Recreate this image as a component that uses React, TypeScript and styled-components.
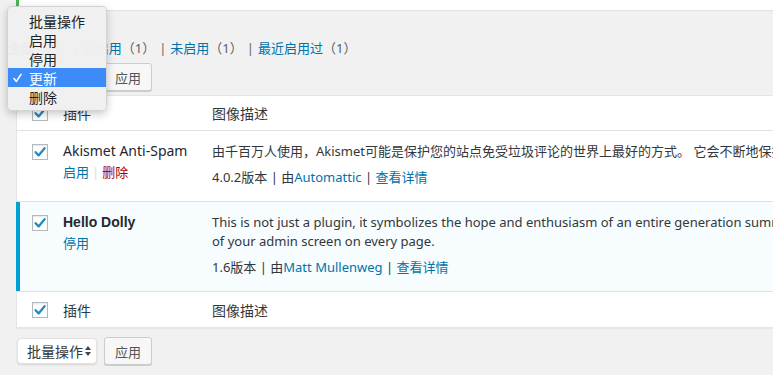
import React from "react";
import styled, { createGlobalStyle, css } from "styled-components";

const GlobalStyle = createGlobalStyle`
  html, body {
    margin: 0;
    padding: 0;
    overflow: hidden;
    background: #f1f1f1;
  }
  body {
    font-family: "Noto Sans", "Noto Sans CJK SC", sans-serif;
    font-size: 13px;
    color: #444;
  }
  * {
    box-sizing: border-box;
  }
`;

const Page = styled.div`
  position: relative;
  width: 1900px;
  height: 375px;
  padding-left: 16px;
`;

const Notice = styled.div`
  height: 10px;
  background: #fff;
  border-left: 3px solid #46b450;
  box-shadow: 0 1px 1px rgba(0, 0, 0, 0.06);
`;

const SubSubSub = styled.ul`
  display: flex;
  margin: 28px 0 0 -8px;
  padding: 0;
  list-style: none;
  line-height: 20px;
  color: #666;
`;

const FilterItem = styled.li`
  display: flex;
  white-space: nowrap;
`;

const Separator = styled.span`
  padding: 0 4px;
`;

const FilterLink = styled.a<{ $current?: boolean }>`
  color: ${(p) => (p.$current ? "#000" : "#0073aa")};
  font-weight: ${(p) => (p.$current ? 600 : 400)};
  text-decoration: none;
`;

const Count = styled.span`
  color: #555d66;
  font-weight: 400;
`;

const TableNav = styled.div<{ $bottom?: boolean }>`
  display: flex;
  align-items: center;
  gap: 7px;
  height: 28px;
  margin-top: ${(p) => (p.$bottom ? "9px" : "5px")};
`;

const Select = styled.div`
  display: flex;
  align-items: center;
  justify-content: space-between;
  width: 80px;
  height: 26px;
  margin-left: 1px;
  padding: 0 5px 0 9px;
  background: #fff;
  border: 1px solid #e2e2e2;
  border-radius: 4px;
  box-shadow: 0 1px 2px rgba(0, 0, 0, 0.12);
  font-size: 14px;
  color: #32373c;
`;

const Button = styled.div`
  display: flex;
  align-items: center;
  justify-content: center;
  width: 48px;
  height: 28px;
  background: #f7f7f7;
  border: 1px solid #ccc;
  border-radius: 3px;
  box-shadow: 0 1px 0 #ccc;
  font-size: 13px;
  color: #555;
`;

const Table = styled.div`
  margin-top: 4px;
  width: 1880px;
  background: #fff;
  border: 1px solid #e5e5e5;
  box-shadow: 0 1px 1px rgba(0, 0, 0, 0.04);
`;

const Row = styled.div<{ $head?: boolean; $active?: boolean }>`
  display: grid;
  grid-template-columns: 38px 149px 1fr;
  align-items: ${(p) => (p.$head ? "center" : "start")};
  min-height: ${(p) => (p.$head ? "35px" : "0")};
  border-bottom: 1px solid #e1e1e1;
  &:last-child {
    border-bottom: none;
  }
  ${(p) =>
    p.$active &&
    css`
      background: #f7fcfe;
      margin-left: -1px;
      padding-left: 1px;
      box-shadow: inset 4px 0 0 #00a0d2;
    `}
`;

const CheckCell = styled.div<{ $head?: boolean }>`
  display: flex;
  padding-left: 15px;
  padding-top: ${(p) => (p.$head ? "0" : "13px")};
`;

const Box = styled.span`
  display: flex;
  align-items: center;
  justify-content: center;
  width: 16px;
  height: 16px;
  background: #fff;
  border: 1px solid #b4b9be;
  box-shadow: inset 0 1px 2px rgba(0, 0, 0, 0.1);
`;

const HeadText = styled.div`
  padding: 0 8px;
  font-size: 14px;
  color: #32373c;
`;

const TitleCell = styled.div`
  padding: 10px 8px 14px;
`;

const PluginName = styled.div<{ $active?: boolean }>`
  font-size: 14px;
  line-height: 20px;
  color: #23282d;
  white-space: nowrap;
  ${(p) =>
    p.$active &&
    css`
      font-family: "Liberation Sans", "Noto Sans CJK SC", sans-serif;
      font-weight: 700;
    `}
`;

const RowActions = styled.div`
  display: flex;
  line-height: 22px;
  color: #ddd;
`;

const ActionLink = styled.a<{ $danger?: boolean }>`
  color: ${(p) => (p.$danger ? "#a00" : "#0073aa")};
  text-decoration: none;
`;

const ActionSep = styled.span`
  padding: 0 3px;
`;

const DescCell = styled.div`
  padding: 11px 8px 14px;
  line-height: 19px;
  color: #32373c;
  white-space: nowrap;
`;

const Description = styled.p`
  margin: 0;
`;

const VersionLine = styled.div`
  margin-top: 7px;
`;

const MetaLink = styled.a`
  color: #0073aa;
  text-decoration: none;
`;

const Menu = styled.ul`
  position: absolute;
  left: 7px;
  top: 6px;
  width: 100px;
  margin: 0;
  padding: 4px 0;
  list-style: none;
  background: rgba(240, 240, 240, 0.98);
  border: 1px solid rgba(0, 0, 0, 0.12);
  border-radius: 5px;
  box-shadow: 0 3px 8px rgba(0, 0, 0, 0.22);
  font-size: 14px;
  color: #222;
`;

const MenuItem = styled.li<{ $selected?: boolean }>`
  display: flex;
  align-items: center;
  height: 19px;
  padding-left: ${(p) => (p.$selected ? "5px" : "21px")};
  ${(p) =>
    p.$selected &&
    css`
      background: #3d8bf7;
      color: #fff;
    `}
`;

const MenuCheck = styled.svg`
  margin-right: 7px;
`;

const Checkbox = () => (
  <Box>
    <svg width="14" height="14" viewBox="0 0 14 14">
      <path
        d="M2.6 7.2 L5.6 10.4 L11.6 3.2"
        fill="none"
        stroke="#1e8cbe"
        strokeWidth="2.3"
        strokeLinecap="round"
        strokeLinejoin="round"
      />
    </svg>
  </Box>
);

const SortArrows = () => (
  <svg width="6" height="10" viewBox="0 0 6 10">
    <path d="M3 0 L6 4 L0 4 Z" fill="#444" />
    <path d="M0 6 L6 6 L3 10 Z" fill="#444" />
  </svg>
);

const filters = [
  { label: "全部", count: 2, current: true },
  { label: "已启用", count: 1 },
  { label: "未启用", count: 1 },
  { label: "最近启用过", count: 1 },
];

const bulkActions = ["批量操作", "启用", "停用", "更新", "删除"];

function HeadRow() {
  return (
    <Row $head>
      <CheckCell $head>
        <Checkbox />
      </CheckCell>
      <HeadText>插件</HeadText>
      <HeadText>图像描述</HeadText>
    </Row>
  );
}

function BulkBar({ bottom }: { bottom?: boolean }) {
  return (
    <TableNav $bottom={bottom}>
      <Select>
        批量操作
        <SortArrows />
      </Select>
      <Button>应用</Button>
    </TableNav>
  );
}

export default function App() {
  return (
    <>
      <GlobalStyle />
      <Page>
        <Notice />
        <SubSubSub>
          {filters.map((f, i) => (
            <FilterItem key={f.label}>
              <FilterLink $current={f.current}>
                {f.label}
                <Count>（{f.count}）</Count>
              </FilterLink>
              {i < filters.length - 1 && <Separator>|</Separator>}
            </FilterItem>
          ))}
        </SubSubSub>
        <BulkBar />
        <Table>
          <HeadRow />
          <Row>
            <CheckCell>
              <Checkbox />
            </CheckCell>
            <TitleCell>
              <PluginName>Akismet Anti-Spam</PluginName>
              <RowActions>
                <ActionLink>启用</ActionLink>
                <ActionSep>|</ActionSep>
                <ActionLink $danger>删除</ActionLink>
              </RowActions>
            </TitleCell>
            <DescCell>
              <Description>
                由千百万人使用，Akismet可能是保护您的站点免受垃圾评论的世界上最好的方式。
                它会不断地保护您的站点，甚至在您睡觉时也是如此。开始使用：激活Akismet插件，然后前往Akismet设置页面来设置您的API密钥。
              </Description>
              <VersionLine>
                4.0.2版本 | 由<MetaLink>Automattic</MetaLink> | <MetaLink>查看详情</MetaLink>
              </VersionLine>
            </DescCell>
          </Row>
          <Row $active>
            <CheckCell>
              <Checkbox />
            </CheckCell>
            <TitleCell>
              <PluginName $active>Hello Dolly</PluginName>
              <RowActions>
                <ActionLink>停用</ActionLink>
              </RowActions>
            </TitleCell>
            <DescCell>
              <Description>
                This is not just a plugin, it symbolizes the hope and enthusiasm of an entire
                generation summed up in two words sung most famously by Louis Armstrong: Hello,
                Dolly. When activated you will randomly see a lyric from Hello, Dolly in the upper
                right
                <br />
                of your admin screen on every page.
              </Description>
              <VersionLine>
                1.6版本 | 由<MetaLink>Matt Mullenweg</MetaLink> | <MetaLink>查看详情</MetaLink>
              </VersionLine>
            </DescCell>
          </Row>
          <HeadRow />
        </Table>
        <BulkBar bottom />
        <Menu>
          {bulkActions.map((a) => (
            <MenuItem key={a} $selected={a === "更新"}>
              {a === "更新" && (
                <MenuCheck width="9" height="10" viewBox="0 0 9 10">
                  <path
                    d="M1 5.6 L3.4 8.4 L8 1.4"
                    fill="none"
                    stroke="#fff"
                    strokeWidth="1.6"
                    strokeLinecap="round"
                    strokeLinejoin="round"
                  />
                </MenuCheck>
              )}
              {a}
            </MenuItem>
          ))}
        </Menu>
      </Page>
    </>
  );
}
